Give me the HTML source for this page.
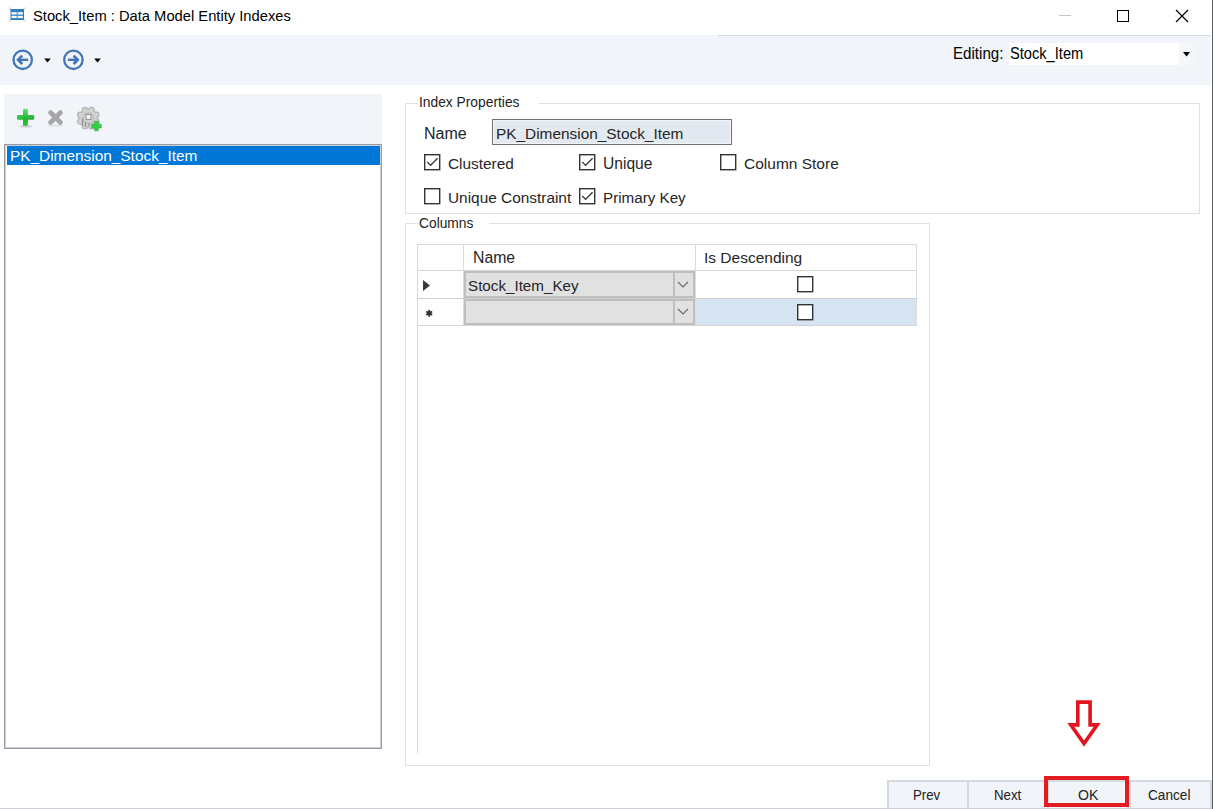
<!DOCTYPE html>
<html><head><meta charset="utf-8">
<style>
html,body{margin:0;padding:0;}
body{width:1213px;height:809px;position:relative;overflow:hidden;background:#fff;font-family:"Liberation Sans",sans-serif;color:#000;}
.a{position:absolute;}
.t{position:absolute;white-space:pre;line-height:1;font-size:15px;color:#262626;}
.cb{position:absolute;width:13px;height:13px;border:1.5px solid #3c3c3c;background:#fff;}
.g{font-size:15.5px;transform:scaleX(0.89);transform-origin:0 0;color:#222;}
.bt{font-size:15.5px;transform:scaleX(0.855);transform-origin:0 0;color:#222;}
.gb{position:absolute;border:1px solid #dde1e6;}
</style></head>
<body>
<!-- title bar -->
<svg class="a" style="left:9px;top:7px" width="17" height="15" viewBox="0 0 17 15">
  <g fill="#d8d8d8"><rect x="0" y="0.5" width="2" height="2"/><rect x="14.5" y="0.5" width="2" height="2"/><rect x="0" y="12.5" width="2" height="2"/><rect x="14.5" y="12.5" width="2" height="2"/></g>
  <rect x="1.5" y="2" width="13.5" height="11" fill="#2f7fc1"/>
  <rect x="2.5" y="5.2" width="5.2" height="2.3" fill="#fff"/>
  <rect x="8.6" y="5.2" width="5.2" height="2.3" fill="#fff"/>
  <rect x="2.5" y="8.8" width="5.2" height="2.3" fill="#fff"/>
  <rect x="8.6" y="8.8" width="5.2" height="2.3" fill="#fff"/>
</svg>
<div class="t" style="left:33px;top:7.5px;font-size:15.5px;transform:scaleX(0.95);transform-origin:0 0;color:#000">Stock_Item : Data Model Entity Indexes</div>
<div class="a" style="left:1059px;top:15px;width:12px;height:1px;background:#c6c6c6"></div>
<div class="a" style="left:1117px;top:10px;width:10px;height:10px;border:1.2px solid #000"></div>
<svg class="a" style="left:1175px;top:9px" width="14" height="14" viewBox="0 0 14 14"><path d="M1 1L13 13M13 1L1 13" stroke="#000" stroke-width="1.2"/></svg>
<div class="a" style="left:1212px;top:0;width:1px;height:809px;background:#5a5f63"></div>

<!-- toolbar -->
<div class="a" style="left:0;top:35px;width:1211px;height:50px;background:#f1f4f8"></div>
<div class="a" style="left:718px;top:35px;width:493px;height:1px;background:#d6dadd"></div>
<svg class="a" style="left:12px;top:49px" width="22" height="22" viewBox="0 0 22 22">
  <circle cx="10.7" cy="10.8" r="9.2" fill="none" stroke="#4175b5" stroke-width="2.3"/>
  <path d="M16.2 10.8H6.5" stroke="#4175b5" stroke-width="2.4"/>
  <path d="M10.2 6.6L6.1 10.8L10.2 15" fill="none" stroke="#4175b5" stroke-width="2.7"/>
</svg>
<svg class="a" style="left:44px;top:58px" width="8" height="6" viewBox="0 0 8 6"><path d="M0.2 0.6H6.8L3.5 4.6Z" fill="#000"/></svg>
<svg class="a" style="left:63px;top:49px" width="22" height="22" viewBox="0 0 22 22">
  <circle cx="10.4" cy="10.8" r="9.2" fill="none" stroke="#4175b5" stroke-width="2.3"/>
  <path d="M4.9 10.8H14.4" stroke="#4175b5" stroke-width="2.4"/>
  <path d="M10.6 6.6L14.7 10.8L10.6 15" fill="none" stroke="#4175b5" stroke-width="2.7"/>
</svg>
<svg class="a" style="left:94px;top:58px" width="8" height="6" viewBox="0 0 8 6"><path d="M0.2 0.6H6.8L3.5 4.6Z" fill="#000"/></svg>
<div class="t" style="left:953px;top:46.3px;font-size:16px;transform:scaleX(0.945);transform-origin:0 0;color:#000">Editing:</div>
<div class="a" style="left:1009px;top:43px;width:185px;height:22px;background:#fff"></div>
<div class="a" style="left:1179px;top:43px;width:15px;height:22px;background:#f4f6f8"></div>
<div class="t" style="left:1010px;top:46.3px;font-size:16px;transform:scaleX(0.915);transform-origin:0 0;color:#000">Stock_Item</div>
<svg class="a" style="left:1183px;top:52px" width="8" height="5" viewBox="0 0 8 5"><path d="M0 0H7L3.5 4.5Z" fill="#000"/></svg>

<!-- left panel -->
<div class="a" style="left:4px;top:94px;width:378px;height:50px;background:#f1f4f8"></div>
<svg class="a" style="left:16px;top:108px" width="20" height="20" viewBox="0 0 20 20">
  <defs><linearGradient id="pg" x1="0" y1="0" x2="0" y2="1"><stop offset="0" stop-color="#62e072"/><stop offset="0.55" stop-color="#25b136"/><stop offset="1" stop-color="#18d02b"/></linearGradient>
  <linearGradient id="ph" x1="0" y1="0" x2="1" y2="1"><stop offset="0" stop-color="#3fcf50"/><stop offset="1" stop-color="#22a932"/></linearGradient></defs>
  <ellipse cx="10" cy="18.3" rx="6.5" ry="1.3" fill="#b9bdc1" opacity="0.7"/>
  <rect x="1" y="6.9" width="17.2" height="4.8" rx="1.3" fill="url(#ph)"/>
  <rect x="7" y="0.8" width="4.9" height="17" rx="1.3" fill="url(#pg)"/>
</svg>
<svg class="a" style="left:46px;top:108px" width="20" height="20" viewBox="0 0 20 20">
  <ellipse cx="9.5" cy="17.5" rx="7.5" ry="1.1" fill="#d5d9dc" opacity="0.8"/>
  <path d="M4.6 4.6L14.4 14.4M14.4 4.6L4.6 14.4" stroke="#a5a5a5" stroke-width="4.8" stroke-linecap="round"/>
</svg>
<svg class="a" style="left:76px;top:105px" width="27" height="27" viewBox="0 0 27 27">
  <g fill="#b4b4b4"><circle cx="20.35" cy="16.51" r="3.3"/><circle cx="15.65" cy="21.23" r="3.3"/><circle cx="8.99" cy="21.25" r="3.3"/><circle cx="4.27" cy="16.55" r="3.3"/><circle cx="4.25" cy="9.89" r="3.3"/><circle cx="8.95" cy="5.17" r="3.3"/><circle cx="15.61" cy="5.15" r="3.3"/><circle cx="20.33" cy="9.85" r="3.3"/><circle cx="12.3" cy="13.2" r="9.4"/></g>
  <g fill="#d2d2d2"><circle cx="20.35" cy="16.51" r="2.2"/><circle cx="15.65" cy="21.23" r="2.2"/><circle cx="8.99" cy="21.25" r="2.2"/><circle cx="4.27" cy="16.55" r="2.2"/><circle cx="4.25" cy="9.89" r="2.2"/><circle cx="8.95" cy="5.17" r="2.2"/><circle cx="15.61" cy="5.15" r="2.2"/><circle cx="20.33" cy="9.85" r="2.2"/><circle cx="12.3" cy="13.2" r="8.3"/></g>
  <circle cx="12.3" cy="13.2" r="5.5" fill="none" stroke="#bcbcbc" stroke-width="1.2"/>
  <rect x="10" y="9.5" width="5" height="5" fill="#f2f2f2" stroke="#989898" stroke-width="1.1"/>
  <path d="M6.6 13.5V21M9.6 17V22M13 18V21.5" stroke="#858585" stroke-width="1"/>
  <path d="M18.3 16.6H21.2V13.7H24.9V16.6H27.8V20.3H24.9V23.2H21.2V20.3H18.3Z" transform="translate(-2.6,2.6)" fill="#35cf45" stroke="#2aa635" stroke-width="0.6"/>
</svg>
<div class="a" style="left:4px;top:144px;width:378px;height:605px;border:1px solid #959aa2;box-sizing:border-box;background:#fff;box-shadow:inset 0 0 0 1px #cfd2d7"></div>
<div class="a" style="left:7px;top:146px;width:373px;height:19px;background:#0078d7"></div>
<div class="t" style="left:10px;top:148px;color:#fff;font-size:15.4px;">PK_Dimension_Stock_Item</div>

<!-- Index Properties group -->
<div class="gb" style="left:405px;top:103px;width:793px;height:109px"></div>
<div class="a" style="left:418px;top:100px;width:121px;height:6px;background:#fff"></div><div class="t g" style="left:419px;top:94px;">Index Properties</div>
<div class="t" style="left:424px;top:126px;font-size:16px">Name</div>
<div class="a" style="left:492px;top:119px;width:240px;height:26px;border:1px solid #707070;box-sizing:border-box;background:#e3e9f0;box-shadow:inset 0 0 0 1px #f3f5f8"></div>
<div class="t" style="left:496px;top:126px;font-size:15.4px">PK_Dimension_Stock_Item</div>

<svg class="a" style="left:424px;top:154px" width="17" height="17" viewBox="0 0 17 17"><rect x="0.7" y="0.7" width="15" height="15" fill="#fff" stroke="#333" stroke-width="1.4"/></svg>
<svg class="a" style="left:424px;top:154px" width="16" height="16" viewBox="0 0 16 16"><path d="M3.2 8L6.6 11.3L13.6 4.2" fill="none" stroke="#3a3a3a" stroke-width="1.3"/></svg>
<div class="t" style="left:448px;top:156px;font-size:15.4px">Clustered</div>
<svg class="a" style="left:579px;top:154px" width="17" height="17" viewBox="0 0 17 17"><rect x="0.7" y="0.7" width="15" height="15" fill="#fff" stroke="#333" stroke-width="1.4"/></svg>
<svg class="a" style="left:579px;top:154px" width="16" height="16" viewBox="0 0 16 16"><path d="M3.2 8L6.6 11.3L13.6 4.2" fill="none" stroke="#3a3a3a" stroke-width="1.3"/></svg>
<div class="t" style="left:603px;top:156px;font-size:15.6px">Unique</div>
<svg class="a" style="left:720px;top:154px" width="17" height="17" viewBox="0 0 17 17"><rect x="0.7" y="0.7" width="15" height="15" fill="#fff" stroke="#333" stroke-width="1.4"/></svg>
<div class="t" style="left:744px;top:156px;font-size:15.5px">Column Store</div>

<svg class="a" style="left:424px;top:188px" width="17" height="17" viewBox="0 0 17 17"><rect x="0.7" y="0.7" width="15" height="15" fill="#fff" stroke="#333" stroke-width="1.4"/></svg>
<div class="t" style="left:448px;top:190px;font-size:15.4px">Unique Constraint</div>
<svg class="a" style="left:579px;top:188px" width="17" height="17" viewBox="0 0 17 17"><rect x="0.7" y="0.7" width="15" height="15" fill="#fff" stroke="#333" stroke-width="1.4"/></svg>
<svg class="a" style="left:579px;top:188px" width="16" height="16" viewBox="0 0 16 16"><path d="M3.2 8L6.6 11.3L13.6 4.2" fill="none" stroke="#3a3a3a" stroke-width="1.3"/></svg>
<div class="t" style="left:603px;top:190px;font-size:15.2px">Primary Key</div>

<!-- Columns group -->
<div class="gb" style="left:405px;top:223px;width:523px;height:541px"></div>
<div class="a" style="left:418px;top:220px;width:71px;height:6px;background:#fff"></div><div class="t g" style="left:419px;top:215px;">Columns</div>

<!-- grid -->
<div class="a" style="left:417px;top:244px;width:500px;height:1px;background:#d5d9de"></div>
<div class="a" style="left:417px;top:244px;width:1px;height:509px;background:#d5d9de"></div>
<div class="a" style="left:463px;top:244px;width:1px;height:82px;background:#dcdcdc"></div>
<div class="a" style="left:695px;top:244px;width:1px;height:82px;background:#dcdcdc"></div>
<div class="a" style="left:916px;top:244px;width:1px;height:82px;background:#dcdcdc"></div>
<div class="a" style="left:417px;top:270px;width:500px;height:1px;background:#d5d5d5"></div>
<div class="a" style="left:417px;top:298px;width:500px;height:1px;background:#cfcfcf"></div>
<div class="a" style="left:417px;top:325px;width:500px;height:1px;background:#d5d5d5"></div>
<div class="t" style="left:473px;top:250px;font-size:15.8px">Name</div>
<div class="t" style="left:704px;top:250px;font-size:15.5px">Is Descending</div>
<svg class="a" style="left:423px;top:280px" width="8" height="12" viewBox="0 0 8 12"><path d="M0 0L7 5.5L0 11Z" fill="#3a3a3a"/></svg>
<svg class="a" style="left:425px;top:309px" width="9" height="9" viewBox="0 0 9 9"><path d="M4.2 0.8V7.8M1.2 2.5L7.2 6.1M7.2 2.5L1.2 6.1" stroke="#444" stroke-width="1.8"/><circle cx="4.2" cy="4.3" r="2.3" fill="#333"/></svg>
<!-- row 1 combo -->
<div class="a" style="left:464px;top:271px;width:231px;height:27px;border:2px solid #bfbfbf;box-sizing:border-box;background:#e1e1e1"></div>
<div class="a" style="left:673px;top:271px;width:2px;height:27px;background:#bfbfbf"></div>
<svg class="a" style="left:677px;top:281px" width="12" height="7" viewBox="0 0 12 7"><path d="M1 1L6 6L11 1" fill="none" stroke="#6b6b6b" stroke-width="1.2"/></svg>
<div class="t" style="left:468px;top:278px;font-size:15.2px">Stock_Item_Key</div>
<svg class="a" style="left:797px;top:276px" width="17" height="17" viewBox="0 0 17 17"><rect x="0.7" y="0.7" width="15" height="15" fill="#fff" stroke="#333" stroke-width="1.4"/></svg>
<!-- row 2 -->
<div class="a" style="left:696px;top:299px;width:220px;height:26px;background:#d6e3f1"></div>
<div class="a" style="left:464px;top:299px;width:231px;height:26px;border:2px solid #bfbfbf;box-sizing:border-box;background:#e1e1e1"></div>
<div class="a" style="left:673px;top:299px;width:2px;height:26px;background:#bfbfbf"></div>
<svg class="a" style="left:677px;top:308px" width="12" height="7" viewBox="0 0 12 7"><path d="M1 1L6 6L11 1" fill="none" stroke="#6b6b6b" stroke-width="1.2"/></svg>
<svg class="a" style="left:797px;top:304px" width="17" height="17" viewBox="0 0 17 17"><rect x="0.7" y="0.7" width="15" height="15" fill="#fff" stroke="#333" stroke-width="1.4"/></svg>

<!-- arrow -->
<svg class="a" style="left:1066px;top:698px" width="36" height="52" viewBox="0 0 36 52">
  <path d="M11.8 4.1H24.1V26.9H31.2L18 45.6L4.8 26.9H11.8Z" fill="none" stroke="#e3141f" stroke-width="3.6"/>
</svg>

<!-- bottom buttons -->
<div class="a" style="left:0;top:808px;width:1212px;height:1px;background:#cdd1d5"></div>
<div class="a" style="left:887px;top:780px;width:82px;height:28px;background:#f1f4f8;border:2px solid #d5d9dd;border-bottom:0;box-sizing:border-box"></div>
<div class="a" style="left:967px;top:780px;width:82px;height:28px;background:#f1f4f8;border:2px solid #d5d9dd;border-bottom:0;box-sizing:border-box"></div>
<div class="a" style="left:1047px;top:780px;width:82px;height:28px;background:#f1f4f8;border:2px solid #d5d9dd;border-bottom:0;box-sizing:border-box"></div>
<div class="a" style="left:1129px;top:780px;width:83px;height:28px;background:#f1f4f8;border:2px solid #d5d9dd;border-bottom:0;box-sizing:border-box"></div>
<div class="t bt" style="left:913px;top:787px;">Prev</div>
<div class="t bt" style="left:994px;top:787px;">Next</div>
<div class="t bt" style="left:1078px;top:787px;transform:scaleX(0.91)">OK</div>
<div class="t bt" style="left:1148px;top:787px;transform:scaleX(0.88)">Cancel</div>
<div class="a" style="left:1044px;top:776px;width:85px;height:31px;border:4px solid #e31b23;box-sizing:border-box"></div>
</body></html>
